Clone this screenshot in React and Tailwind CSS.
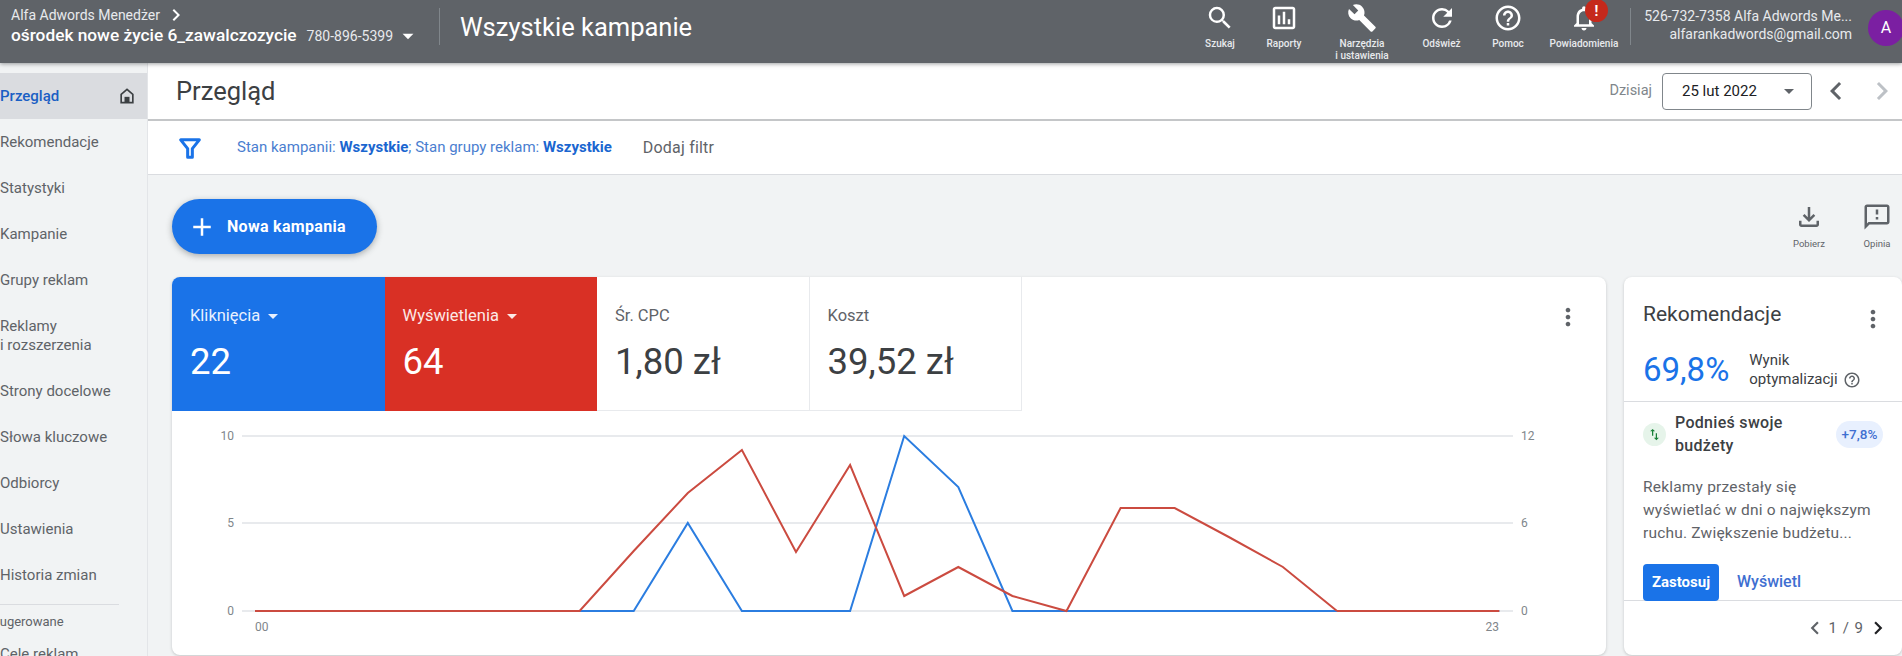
import {
  MdSearch, MdOutlineAssessment, MdBuild, MdRefresh, MdHelpOutline, MdOutlineNotifications,
  MdAdd, MdOutlineFileDownload, MdOutlineFeedback, MdMoreVert,
  MdChevronLeft, MdChevronRight, MdArrowDropDown, MdSwapVert,
} from 'react-icons/md';

const topIcons = [
  { Icon: MdSearch, label: 'Szukaj', width: 'w-[60px]' },
  { Icon: MdOutlineAssessment, label: 'Raporty', width: 'w-[68px]' },
  { Icon: MdBuild, label: 'Narzędzia', label2: 'i ustawienia', width: 'w-[88px]' },
  { Icon: MdRefresh, label: 'Odśwież', width: 'w-[71px]' },
  { Icon: MdHelpOutline, label: 'Pomoc', width: 'w-[62px]' },
  { Icon: MdOutlineNotifications, label: 'Powiadomienia', width: 'w-[90px]', badge: true },
];

const navItems = ['Rekomendacje', 'Statystyki', 'Kampanie', 'Grupy reklam'];
const navItems2 = ['Strony docelowe', 'Słowa kluczowe', 'Odbiorcy', 'Ustawienia', 'Historia zmian'];

const xAt = (i) => 255 + i * 54.1;
const toPoints = (ys) => ys.map((y, i) => `${xAt(i)},${y}`).join(' ');
const base = 611;
const bluePoints = [base, base, base, base, base, base, base, base, 523, base, base, base, 436, 487, base, base, base, base, base, base, base, base, base, base];
const redPoints = [base, base, base, base, base, base, base, 551, 493, 450, 552, 465, 596, 567, 596, base, 508, 508, 537, 567, base, base, base, base];

function TopIcon({ Icon, label, label2, width, badge }) {
  return (
    <div className={`${width} relative flex h-[63px] shrink-0 flex-col items-center pt-[3px] text-[10px] leading-[12px] font-medium text-[#e8eaed]`}>
      <Icon className="h-[30px] w-[30px] text-white" />
      <span className="mt-[5px]">{label}</span>
      {label2 && <span>{label2}</span>}
      {badge && (
        <span className="absolute top-[-1px] left-[46px] flex h-[23px] w-[23px] items-center justify-center rounded-full bg-[#c5291c] text-[14px] font-bold text-white">!</span>
      )}
    </div>
  );
}

function Metric({ label, value, className, labelClass, caret }) {
  return (
    <div className={`h-[134px] w-[212.5px] pt-[28px] pl-[18px] ${className}`}>
      <div className={`flex h-[22px] items-center text-[16.5px] ${labelClass}`}>
        {label}
        {caret && <MdArrowDropDown className="ml-[1px] h-[24px] w-[24px]" />}
      </div>
      <div className="mt-[12px] text-[36.5px] leading-[46px]">{value}</div>
    </div>
  );
}

export default function App() {
  return (
    <div className="flex h-[656px] w-[1902px] flex-col overflow-hidden bg-[#f1f3f4] font-['Roboto',sans-serif]">
      <header className="z-20 flex h-[63px] shrink-0 items-start overflow-hidden bg-[#5f6368] shadow-[0_1px_4px_rgba(60,64,67,0.5)]">
        <div className="w-[439px] shrink-0 pt-[6px] pl-[11px]">
          <div className="flex h-[18px] items-center text-[14px] text-[#e8eaed]">
            Alfa Adwords Menedżer
            <MdChevronRight className="ml-[4px] h-[24px] w-[24px] text-white" />
          </div>
          <div className="flex h-[24px] items-center text-white">
            <span className="text-[17.3px] font-medium whitespace-nowrap">ośrodek nowe życie 6_zawalczozycie</span>
            <span className="ml-[10px] text-[14px] text-[#e8eaed]">780-896-5399</span>
            <MdArrowDropDown className="ml-[2px] h-[26px] w-[26px]" />
          </div>
        </div>
        <div className="mt-[8px] h-[37px] w-px shrink-0 bg-[#80868b]" />
        <div className="ml-[20px] w-[730px] shrink-0 pt-[11px] text-[25.5px] leading-[32px] text-white">Wszystkie kampanie</div>
        <div className="flex shrink-0">
          {topIcons.map((item) => (
            <TopIcon key={item.label} {...item} />
          ))}
        </div>
        <div className="mt-[8px] ml-[1px] h-[37px] w-px shrink-0 bg-[#80868b]" />
        <div className="w-[221px] shrink-0 pt-[7px] text-right text-[14px] leading-[18px] text-[#e8eaed]">
          <div className="whitespace-nowrap">526-732-7358 Alfa Adwords Me...</div>
          <div className="whitespace-nowrap">alfarankadwords@gmail.com</div>
        </div>
        <div className="mt-[10px] ml-[16px] flex h-[36px] w-[36px] shrink-0 items-center justify-center rounded-full bg-[#7b1fa2] text-[16px] text-white">A</div>
      </header>

      <div className="flex min-h-0 flex-1">
        <aside className="w-[148px] shrink-0 overflow-hidden border-r border-[#e3e5e8] pt-[10px] text-[15px] text-[#5f6368]">
          <div className="flex h-[46px] items-center justify-between bg-[#dadce0] pr-[10px] font-medium text-[#1a5fc4]">
            Przegląd
            <svg viewBox="0 0 24 24" className="h-[20px] w-[20px] text-[#3c4043]">
              <path d="M12 4 5 10v10h14V10z" fill="none" stroke="currentColor" strokeWidth="2" />
              <rect x="9" y="13" width="6" height="7" fill="currentColor" />
            </svg>
          </div>
          {navItems.map((name) => (
            <div key={name} className="flex h-[46px] items-center">{name}</div>
          ))}
          <div className="flex h-[65px] flex-col justify-center leading-[19px]">
            <span>Reklamy</span>
            <span>i rozszerzenia</span>
          </div>
          {navItems2.map((name) => (
            <div key={name} className="flex h-[46px] items-center">{name}</div>
          ))}
          <div className="mt-[6px] mr-[28px] border-t border-[#dadce0]" />
          <div className="mt-[8px] -ml-[8px] text-[13px] leading-[18px]">Sugerowane</div>
          <div className="mt-[14px] leading-[18px]">Cele reklam</div>
        </aside>

        <main className="flex min-w-0 flex-1 flex-col">
          <div className="z-10 flex h-[58px] shrink-0 items-center border-b-2 border-[#c4c6c8] bg-white pr-[2px] pl-[28px]">
            <h1 className="text-[25.5px] text-[#3c4043]">Przegląd</h1>
            <span className="ml-auto text-[14.5px] text-[#80868b]">Dzisiaj</span>
            <div className="ml-[10px] flex h-[37px] w-[150px] items-center justify-between rounded-[4px] border border-[#80868b] pr-[10px] pl-[19px] text-[15px] text-[#202124]">
              25 lut 2022
              <MdArrowDropDown className="h-[24px] w-[24px] text-[#5f6368]" />
            </div>
            <MdChevronLeft className="ml-[6px] h-[36px] w-[36px] text-[#5f6368]" />
            <MdChevronRight className="ml-[10px] h-[36px] w-[36px] text-[#bdc1c6]" />
          </div>

          <div className="flex h-[54px] shrink-0 items-center border-b border-[#dadce0] bg-white pl-[28px]">
            <svg viewBox="0 0 24 24" className="h-[28px] w-[28px] text-[#1a73e8]">
              <path d="M4 5h16l-6 7.5V20h-4v-7.5z" fill="none" stroke="currentColor" strokeWidth="2.6" strokeLinejoin="round" />
            </svg>
            <span className="ml-[33px] text-[15px] text-[#4a7ed0]">
              Stan kampanii: <b className="font-bold text-[#1a66d0]">Wszystkie</b>; Stan grupy reklam: <b className="font-bold text-[#1a66d0]">Wszystkie</b>
            </span>
            <span className="ml-[31px] text-[16px] tracking-[0.2px] text-[#5f6368]">Dodaj filtr</span>
          </div>

          <div className="flex min-h-0 flex-1 flex-col pb-px pl-[24px]">
            <div className="flex h-[102px] shrink-0 items-start">
              <button className="mt-[24px] flex h-[55px] w-[205px] items-center rounded-full bg-[#1a73e8] pl-[15px] text-[16px] font-bold tracking-[0.3px] text-white shadow-[0_2px_6px_rgba(60,64,67,0.4)]">
                <MdAdd className="h-[30px] w-[30px]" />
                <span className="ml-[10px]">Nowa kampania</span>
              </button>
              <div className="mt-[27px] ml-auto flex text-[9.5px] text-[#5f6368]">
                <div className="flex w-[68px] flex-col items-center">
                  <MdOutlineFileDownload className="h-[30px] w-[30px]" />
                  <span className="mt-[5px]">Pobierz</span>
                </div>
                <div className="mr-[-9px] flex w-[68px] flex-col items-center">
                  <MdOutlineFeedback className="h-[30px] w-[30px]" />
                  <span className="mt-[5px]">Opinia</span>
                </div>
              </div>
            </div>

            <div className="flex min-h-0 flex-1 gap-[18px]">
              <section className="relative w-[1434px] shrink-0 overflow-hidden rounded-[8px] bg-white shadow-[0_1px_3px_rgba(60,64,67,0.25)]">
                <div className="flex">
                  <Metric label="Kliknięcia" value="22" caret className="bg-[#1a73e8] text-white" labelClass="text-[#e8f0fe]" />
                  <Metric label="Wyświetlenia" value="64" caret className="bg-[#d93025] text-white" labelClass="text-[#fce8e6]" />
                  <Metric label="Śr. CPC" value="1,80 zł" className="border-r border-b border-[#e8eaed] text-[#3c4043]" labelClass="text-[#5f6368]" />
                  <Metric label="Koszt" value="39,52 zł" className="border-r border-b border-[#e8eaed] text-[#3c4043]" labelClass="text-[#5f6368]" />
                </div>
                <MdMoreVert className="absolute top-[26px] right-[24px] h-[28px] w-[28px] text-[#5f6368]" />
                <svg viewBox="172 411 1434 244" className="block h-[244px] w-[1434px]">
                  {[436, 523, 611].map((y) => (
                    <line key={y} x1="242" x2="1513" y1={y} y2={y} stroke="#e8eaed" strokeWidth="2" />
                  ))}
                  <g className="fill-[#80868b] text-[12px]">
                    <text x="234" y="440" textAnchor="end">10</text>
                    <text x="234" y="527" textAnchor="end">5</text>
                    <text x="234" y="615" textAnchor="end">0</text>
                    <text x="1521" y="440">12</text>
                    <text x="1521" y="527">6</text>
                    <text x="1521" y="615">0</text>
                    <text x="255" y="631">00</text>
                    <text x="1499" y="631" textAnchor="end">23</text>
                  </g>
                  <polyline points={toPoints(bluePoints)} fill="none" stroke="#2b7de0" strokeWidth="2" />
                  <polyline points={toPoints(redPoints.slice(0, 21))} fill="none" stroke="#cb4b40" strokeWidth="2" />
                  <polyline points={`${xAt(0)},${base} ${xAt(6)},${base}`} fill="none" stroke="#cb4b40" strokeWidth="2" />
                  <polyline points={`${xAt(20)},${base} ${xAt(23)},${base}`} fill="none" stroke="#cb4b40" strokeWidth="2" />
                </svg>
              </section>

              <section className="relative flex min-w-0 flex-1 flex-col overflow-hidden rounded-[8px] bg-white shadow-[0_1px_3px_rgba(60,64,67,0.25)]">
                <div className="h-[125px] shrink-0 border-b border-[#dadce0] pt-[22px] pl-[19px]">
                  <div className="text-[21px] leading-[30px] text-[#3c4043]">Rekomendacje</div>
                  <MdMoreVert className="absolute top-[28px] right-[15px] h-[28px] w-[28px] text-[#5f6368]" />
                  <div className="mt-[21px] flex items-center">
                    <span className="text-[33px] leading-[40px] text-[#1a73e8]">69,8%</span>
                    <div className="ml-[20px] text-[15px] leading-[19px] text-[#3c4043]">
                      <div>Wynik</div>
                      <div className="flex items-center">
                        optymalizacji
                        <MdHelpOutline className="ml-[5px] h-[18px] w-[18px] text-[#5f6368]" />
                      </div>
                    </div>
                  </div>
                </div>

                <div className="flex shrink-0 items-center pt-[9px] pr-[19px] pl-[19px]">
                  <span className="flex h-[23px] w-[23px] shrink-0 items-center justify-center rounded-full bg-[#e6f4ea]">
                    <MdSwapVert className="h-[15px] w-[15px] text-[#188038]" />
                  </span>
                  <div className="ml-[9px] w-[140px] text-[16px] leading-[23px] font-medium tracking-[0.3px] text-[#3c4043]">Podnieś swoje budżety</div>
                  <span className="ml-auto flex h-[27px] w-[47px] items-center justify-center rounded-full bg-[#e8f0fe] text-[13.5px] font-medium text-[#3f6fd1]">+7,8%</span>
                </div>

                <p className="mt-[19px] pr-[8px] pl-[19px] text-[15.5px] leading-[23px] tracking-[0.2px] whitespace-nowrap text-[#5f6368]">
                  Reklamy przestały się<br />wyświetlać w dni o największym<br />ruchu. Zwiększenie budżetu...
                </p>

                <div className="mt-[19px] flex h-[37px] shrink-0 items-center border-b border-[#dadce0] pl-[19px]">
                  <button className="h-[37px] w-[76px] rounded-[4px] bg-[#1a73e8] text-[15px] font-bold text-white">Zastosuj</button>
                  <span className="ml-[18px] text-[16px] font-medium text-[#3f6fd1]">Wyświetl</span>
                </div>

                <div className="flex flex-1 items-center justify-end pr-[11px] text-[15px] tracking-[1px] text-[#5f6368]">
                  <MdChevronLeft className="h-[26px] w-[26px]" />
                  <span className="mx-[1px]">1 / 9</span>
                  <MdChevronRight className="h-[26px] w-[26px] text-[#202124]" />
                </div>
              </section>
            </div>
          </div>
        </main>
      </div>
    </div>
  );
}
